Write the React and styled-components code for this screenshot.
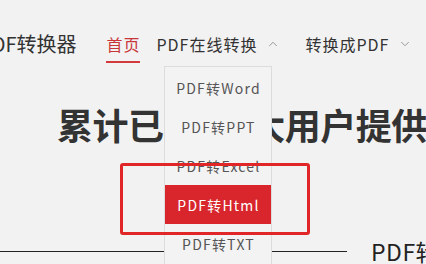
import React from 'react'
import styled, { createGlobalStyle } from "styled-components"
import { ChevronUp, ChevronDown } from "lucide-react"

const GlobalStyle = createGlobalStyle`
    html, body {
        margin: 0;
        padding: 0;
        background: #f2f2f2;
        overflow: hidden;
    }
    body {
        font-family: "Noto Sans CJK SC", "Noto Sans", sans-serif;
        color: #333;
    }
`;

const Page = styled.div`
    position: relative;
    width: 426px;
    height: 264px;
    overflow: hidden;
    background: #f2f2f2;
`;

const Header = styled.header`
    display: flex;
    align-items: flex-start;
    height: 88px;
    padding-top: 32px;
    box-sizing: border-box;
    margin-left: -21px;
`;

const Logo = styled.div`
    font-size: 20px;
    line-height: 24px;
    color: #333;
    margin-right: 30px;
`;

const Nav = styled.nav`
    display: flex;
    align-items: flex-start;
    gap: 16px;
`;

const NavItem = styled.div`
    position: relative;
    display: flex;
    align-items: center;
    gap: 9px;
    font-size: 16px;
    line-height: 24px;
    letter-spacing: 1px;
    padding-bottom: 5px;
    border-bottom: 2px solid ${p => (p.$active ? "#d23a3d" : "transparent")};
    color: ${p => (p.$active ? "#c8363a" : "#333")};
    margin-right: ${p => p.$spaced ? "9px" : "0"};
    svg {
        color: #8a8a8a;
    }
`;

const Dropdown = styled.ul`
    position: absolute;
    top: 34px;
    left: 8px;
    width: 108px;
    margin: 0;
    padding: 1px 0 0;
    list-style: none;
    box-sizing: border-box;
    background: #f3f3f3;
    border: 1px solid #dcdcdc;
    z-index: 2;
`;

const DropItem = styled.li`
    height: 39px;
    display: flex;
    align-items: center;
    justify-content: center;
    font-size: 14px;
    letter-spacing: 1.2px;
    color: ${p => (p.$active ? "#fff" : "#555")};
    background: ${p => (p.$active ? "#d8262c" : "transparent")};
`;

const Hero = styled.section`
    padding-left: 57px;
    margin-top: 14px;
    white-space: nowrap;
`;

const Title = styled.h1`
    margin: 0;
    font-size: 36px;
    line-height: 44px;
    font-weight: 700;
    color: #333;
    letter-spacing: -0.5px;
    word-spacing: 7px;
`;

const SectionHead = styled.div`
    position: absolute;
    left: 0;
    top: 237px;
    display: flex;
    align-items: center;
    gap: 24px;
    white-space: nowrap;
`;

const Rule = styled.span`
    display: block;
    width: 347px;
    height: 1px;
    background: #222;
`;

const SectionTitle = styled.h2`
    margin: 0;
    font-size: 23px;
    line-height: 28px;
    font-weight: 400;
    letter-spacing: 0.5px;
    color: #222;
`;

const Highlight = styled.div`
    position: absolute;
    left: 120px;
    top: 163px;
    width: 190px;
    height: 72px;
    box-sizing: border-box;
    border: 3px solid #e02626;
    border-radius: 3px;
    z-index: 3;
    pointer-events: none;
`;

const items = ["PDF转Word", "PDF转PPT", "PDF转Excel", "PDF转Html", "PDF转TXT", "PDF转图片"];

export default function App() {
    return (
        <Page>
            <GlobalStyle />
            <Header>
                <Logo>PDF转换器</Logo>
                <Nav>
                    <NavItem $active>首页</NavItem>
                    <NavItem $spaced>
                        PDF在线转换
                        <ChevronUp size={14} strokeWidth={1.5} />
                        <Dropdown>
                            {items.map(item => (
                                <DropItem key={item} $active={item === "PDF转Html"}>{item}</DropItem>
                            ))}
                        </Dropdown>
                    </NavItem>
                    <NavItem>
                        转换成PDF
                        <ChevronDown size={14} strokeWidth={1.5} />
                    </NavItem>
                </Nav>
            </Header>
            <Hero>
                <Title>累计已为 广大用户提供</Title>
            </Hero>
            <SectionHead>
                <Rule />
                <SectionTitle>PDF转换工具</SectionTitle>
            </SectionHead>
            <Highlight />
        </Page>
    )
}
